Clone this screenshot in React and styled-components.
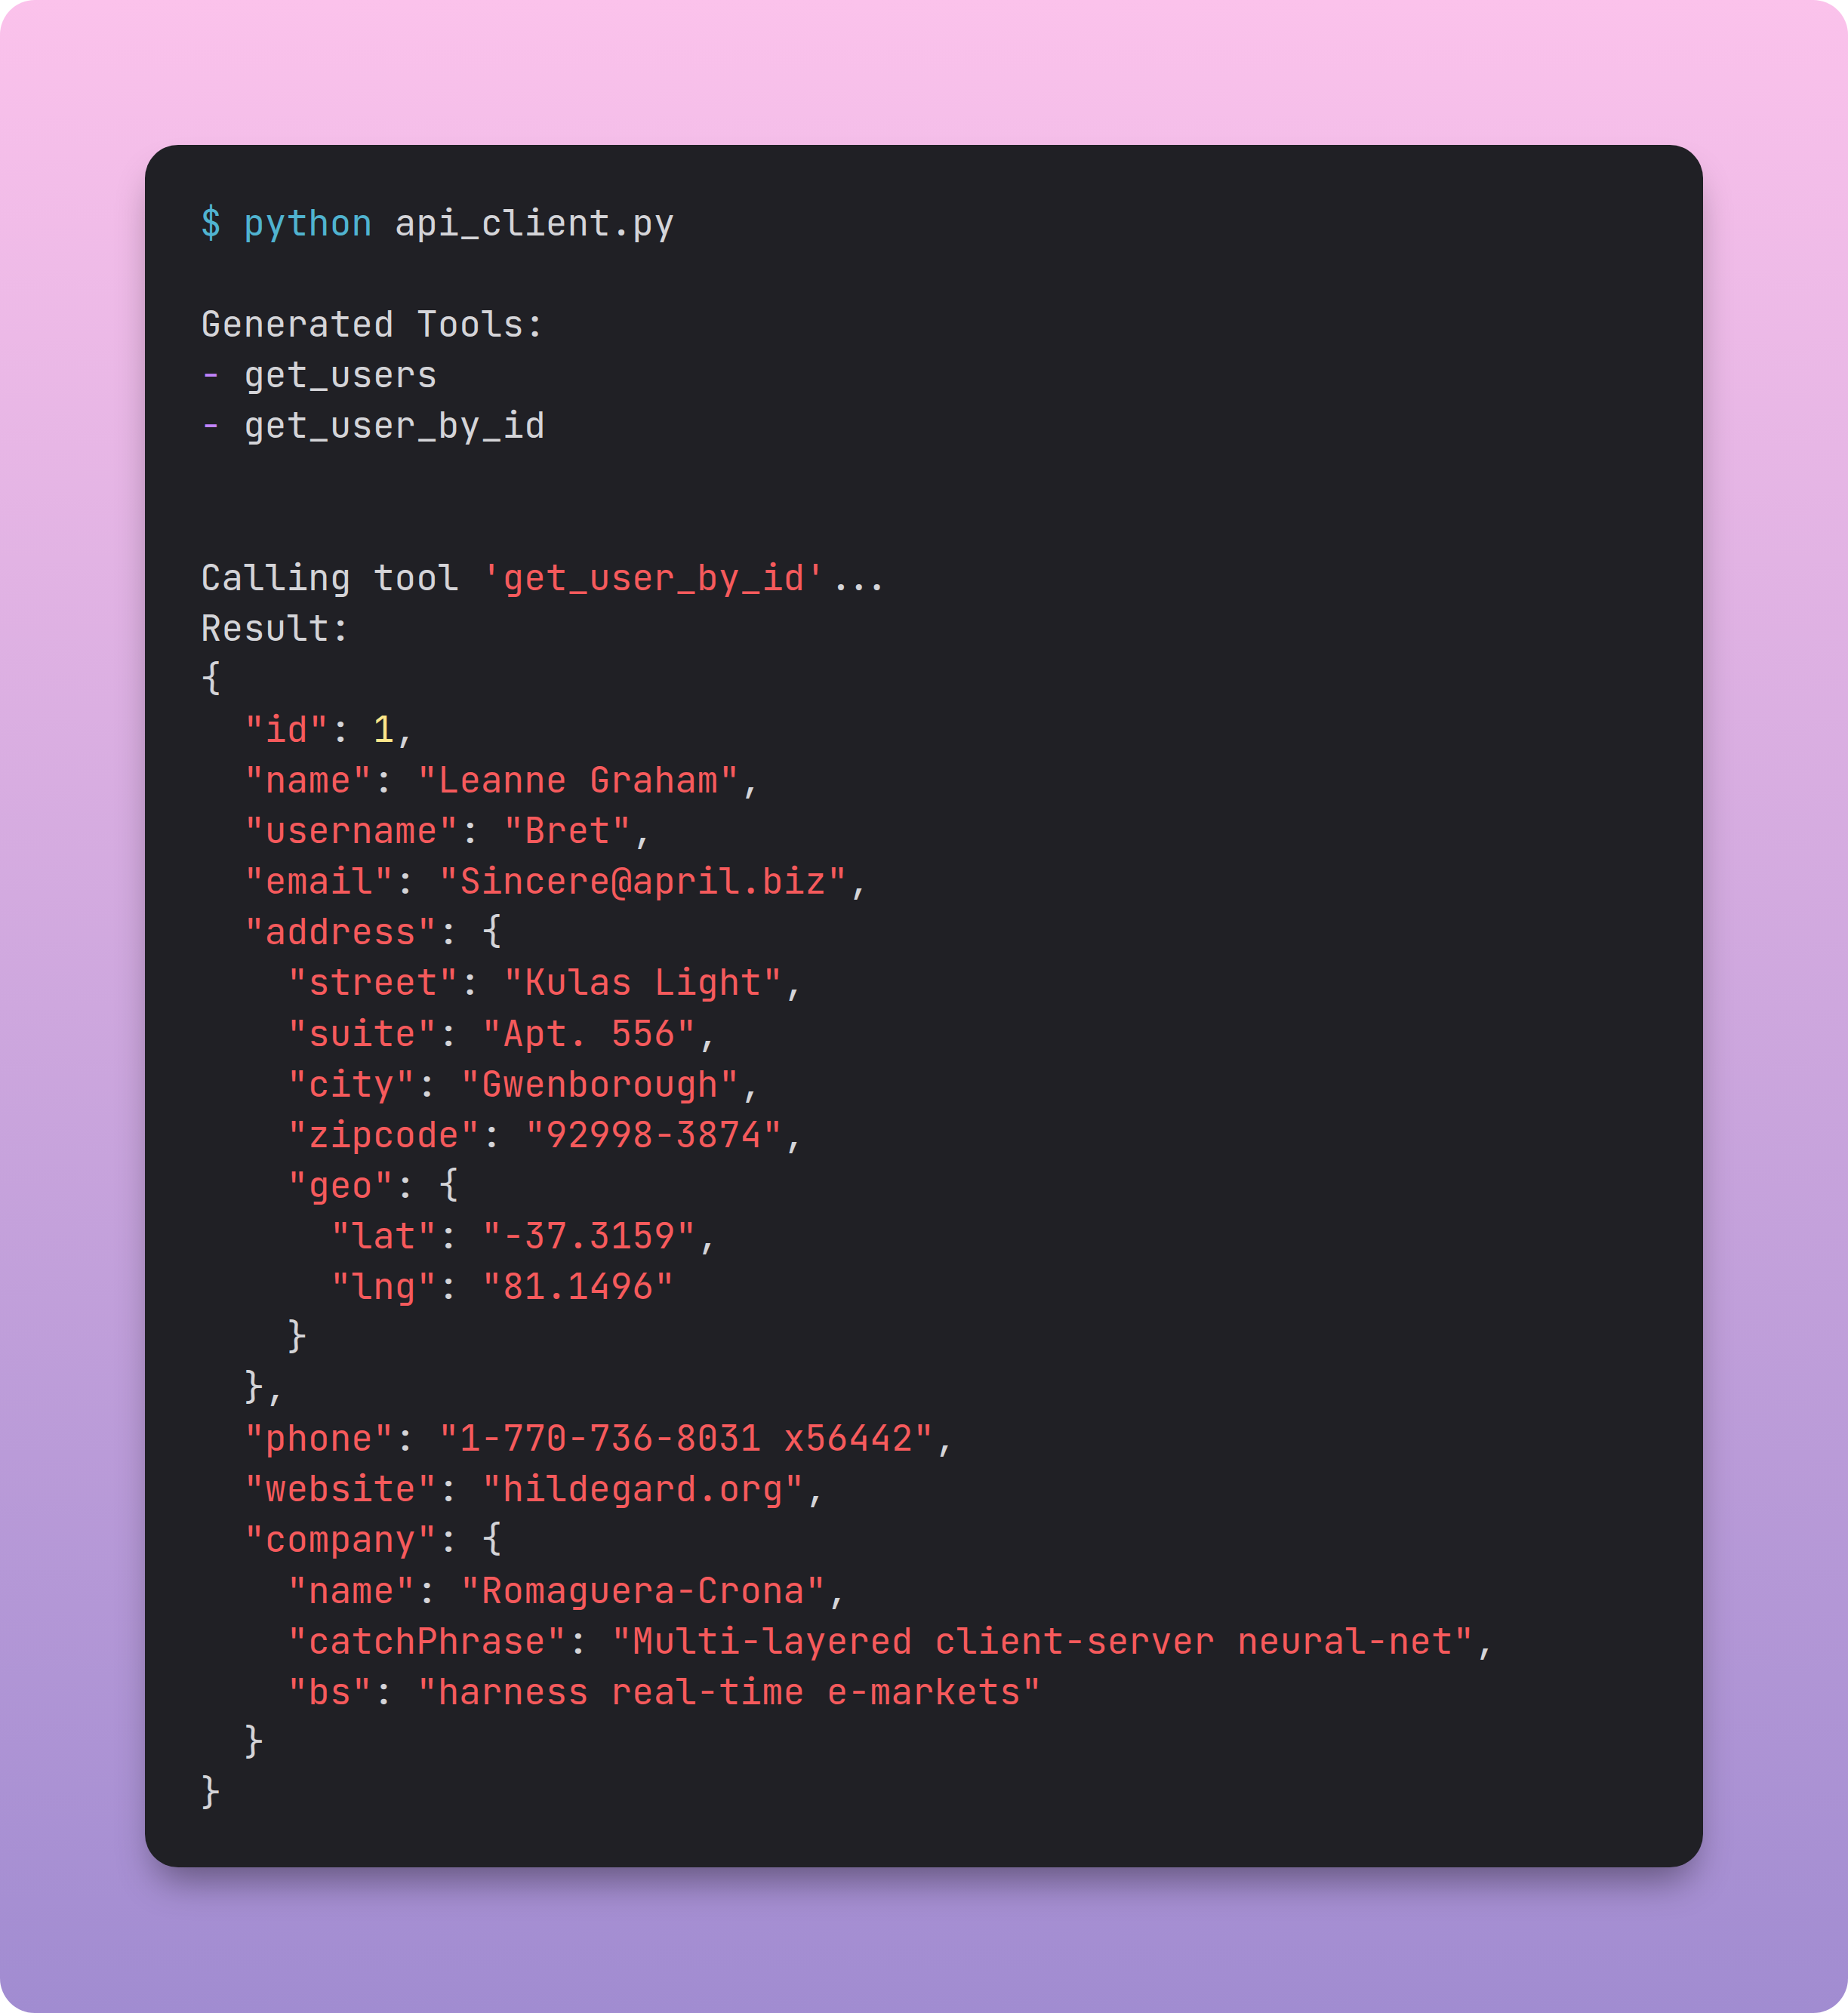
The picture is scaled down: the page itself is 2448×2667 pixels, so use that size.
import React from 'react'
import styled, { createGlobalStyle } from 'styled-components'

const GlobalStyle = createGlobalStyle`
  html, body {
    margin: 0;
    padding: 0;
    background: #ffffff;
  }
`

const colors = {
  text: '#d4d4d8',
  cyan: '#50b3d0',
  purple: '#c084fc',
  red: '#f65a5c',
  yellow: '#fde68a',
}

const Page = styled.div`
  width: 2448px;
  height: 2667px;
  box-sizing: border-box;
  padding: 192px;
  border-radius: 46px;
  background: linear-gradient(to bottom, #fbc2eb 0%, #a18cd1 100%);
`

const Terminal = styled.div`
  background: #202025;
  border-radius: 44px;
  padding: 69px 73px 66px;
  box-shadow: 0 30px 50px -14px rgba(0, 0, 0, 0.42);
  font-family: 'JetBrains Mono', 'DejaVu Sans Mono', 'Liberation Mono', monospace;
  font-size: 47.7px;
  line-height: 67.1px;
  color: ${colors.text};
`

const Line = styled.div`
  white-space: pre;
  min-height: 67.1px;
`

const Token = styled.span`
  color: ${props => colors[props.tone] || colors.text};
`

// each line is a list of [text, tone] pairs
const str = (k, v, indent, tail = ',') => [
  [indent, 'text'],
  [`"${k}"`, 'red'],
  [': ', 'text'],
  [`"${v}"`, 'red'],
  [tail, 'text'],
]

const open = (k, indent) => [
  [indent, 'text'],
  [`"${k}"`, 'red'],
  [': {', 'text'],
]

const lines = [
  [['$ python', 'cyan'], [' api_client.py', 'text']],
  [],
  [['Generated Tools:', 'text']],
  [['-', 'purple'], [' get_users', 'text']],
  [['-', 'purple'], [' get_user_by_id', 'text']],
  [],
  [],
  [['Calling tool ', 'text'], ["'get_user_by_id'", 'red'], ['...', 'text']],
  [['Result:', 'text']],
  [['{', 'text']],
  [['  ', 'text'], ['"id"', 'red'], [': ', 'text'], ['1', 'yellow'], [',', 'text']],
  str('name', 'Leanne Graham', '  '),
  str('username', 'Bret', '  '),
  str('email', 'Sincere@april.biz', '  '),
  open('address', '  '),
  str('street', 'Kulas Light', '    '),
  str('suite', 'Apt. 556', '    '),
  str('city', 'Gwenborough', '    '),
  str('zipcode', '92998-3874', '    '),
  open('geo', '    '),
  str('lat', '-37.3159', '      '),
  str('lng', '81.1496', '      ', ''),
  [['    }', 'text']],
  [['  },', 'text']],
  str('phone', '1-770-736-8031 x56442', '  '),
  str('website', 'hildegard.org', '  '),
  open('company', '  '),
  str('name', 'Romaguera-Crona', '    '),
  str('catchPhrase', 'Multi-layered client-server neural-net', '    '),
  str('bs', 'harness real-time e-markets', '    ', ''),
  [['  }', 'text']],
  [['}', 'text']],
]

const App = () => (
  <>
    <GlobalStyle />
    <Page>
      <Terminal>
        {lines.map((parts, i) => (
          <Line key={i}>
            {parts.map(([text, tone], j) => (
              <Token key={j} tone={tone}>{text}</Token>
            ))}
          </Line>
        ))}
      </Terminal>
    </Page>
  </>
)

export default App
